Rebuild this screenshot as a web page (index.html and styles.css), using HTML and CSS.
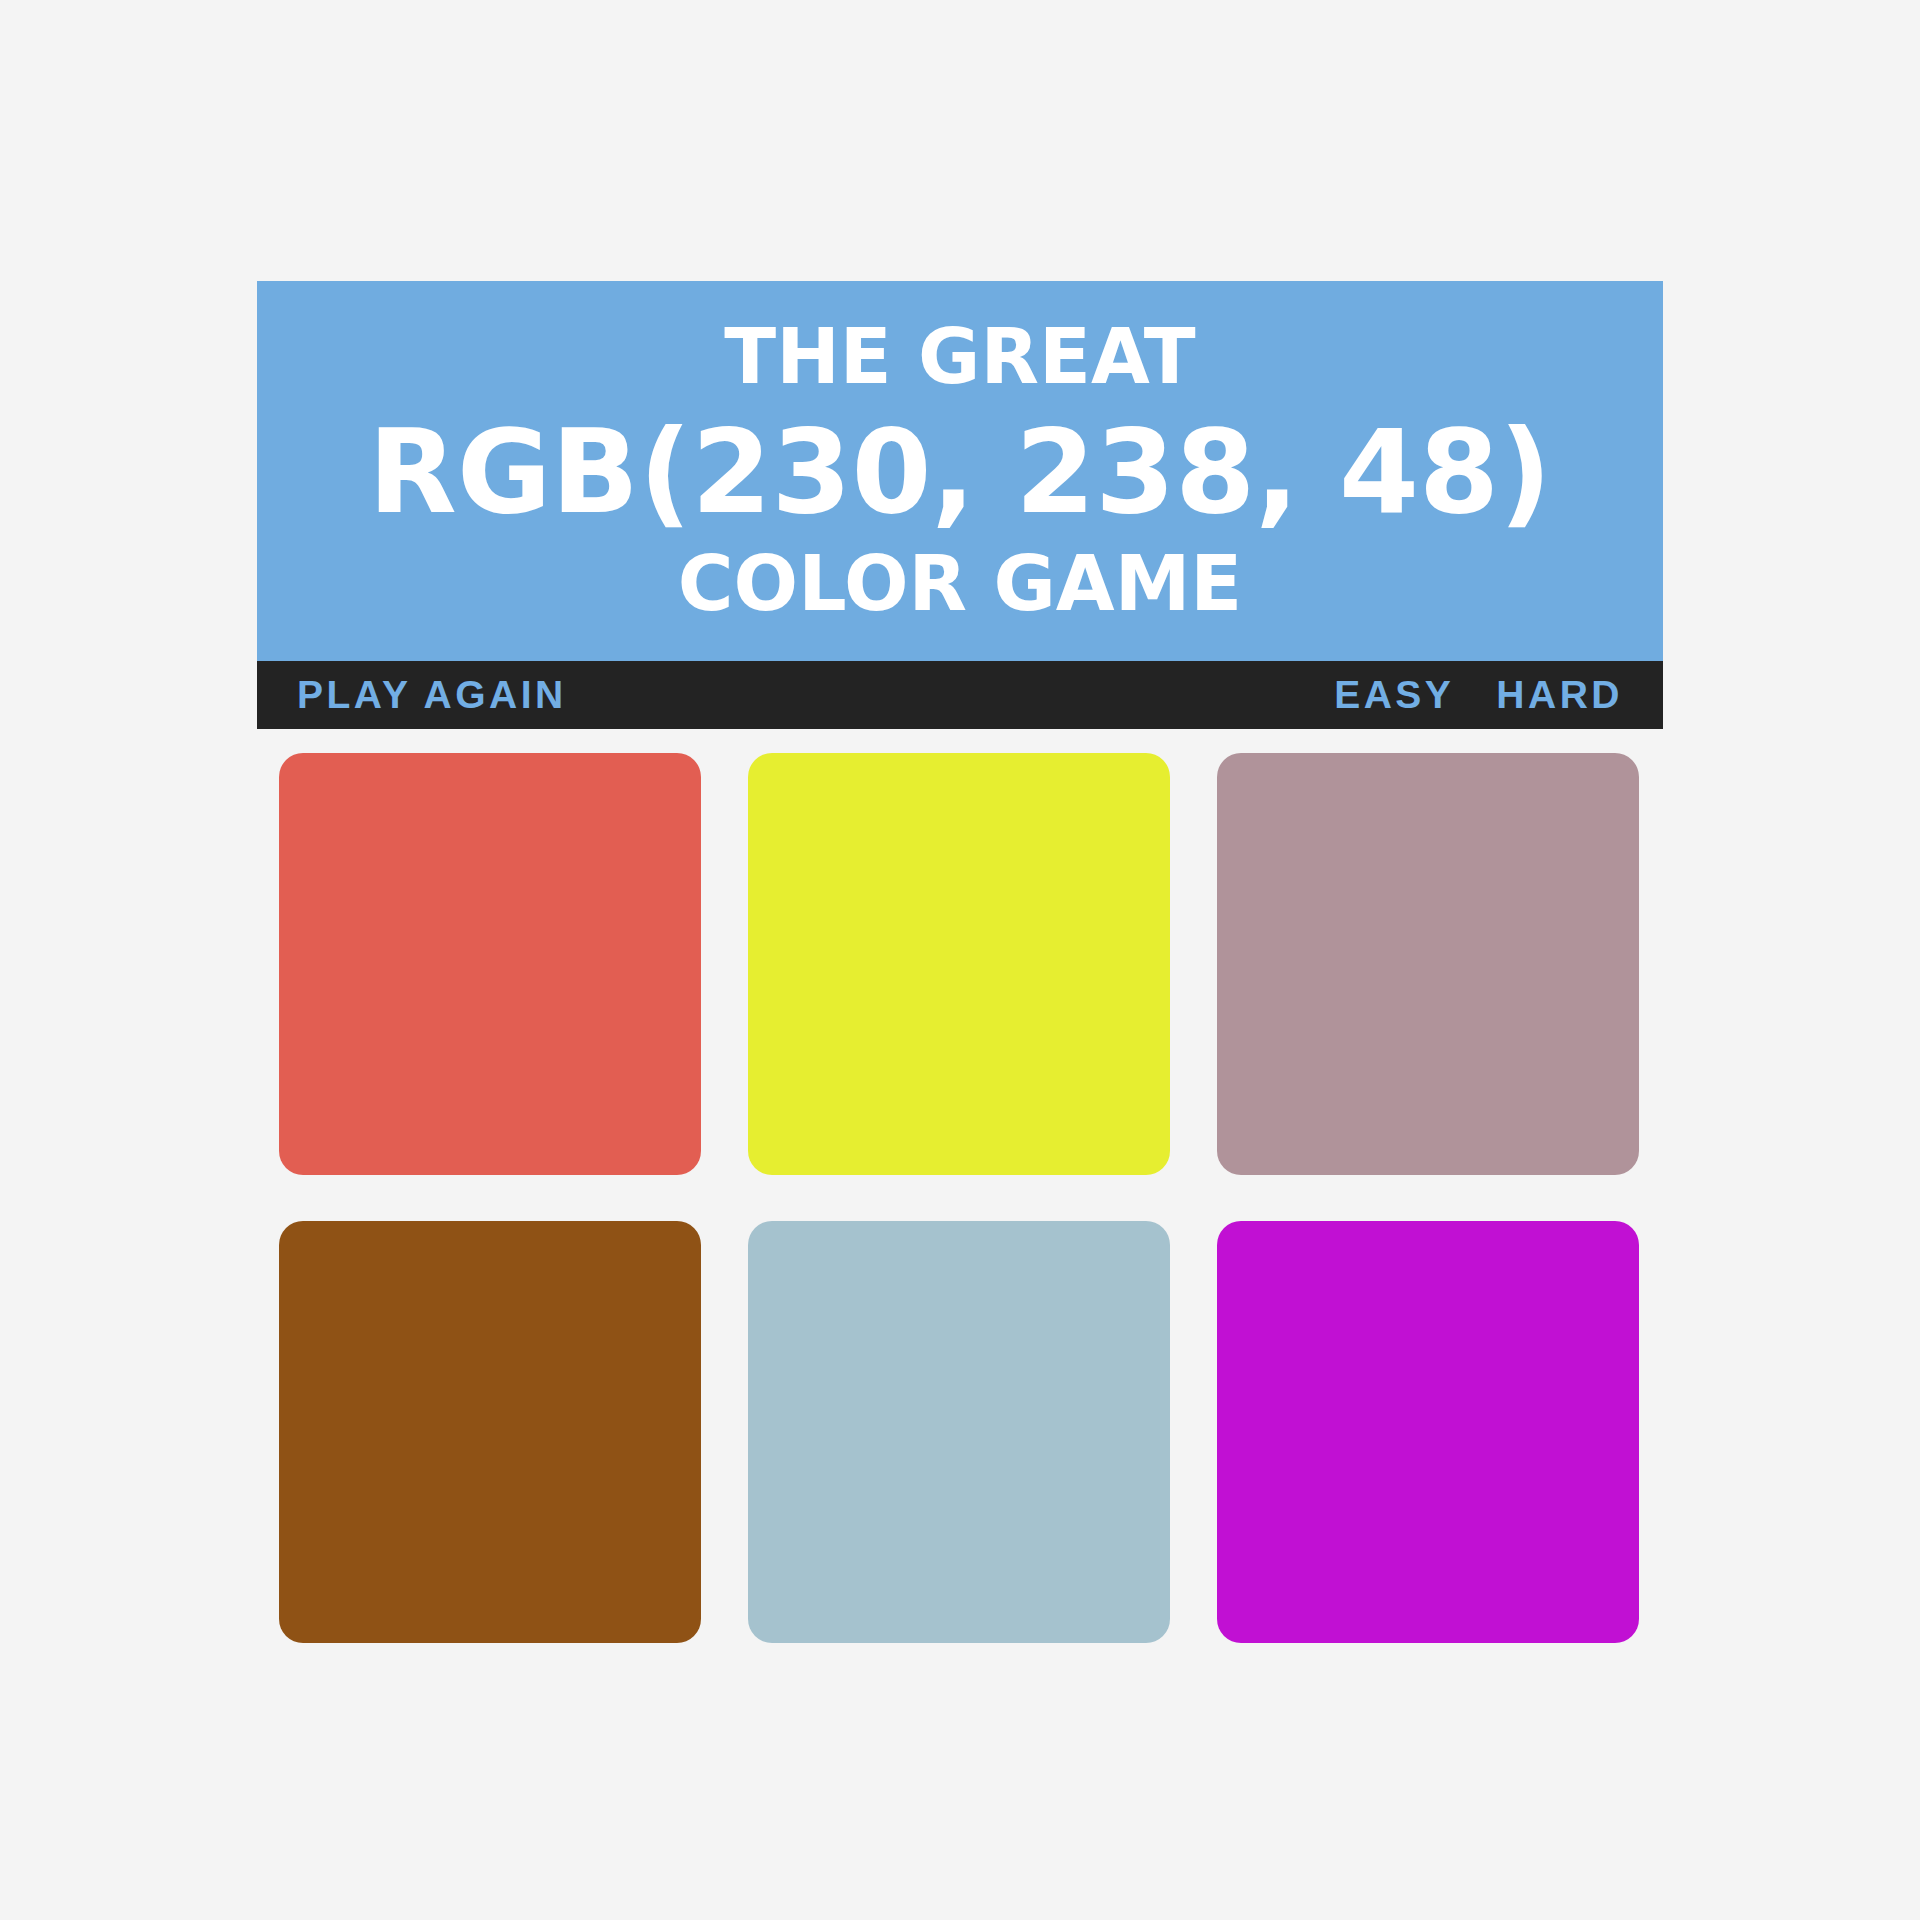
FILE: index.html
```html
<!DOCTYPE html>
<html lang="en">
<head>
<meta charset="utf-8">
<title>The Great RGB Color Game</title>
<link rel="stylesheet" href="styles.css">
</head>
<body>
<div class="game">
  <header class="title">
    <span class="line small first">THE GREAT</span>
    <span class="line big">RGB(230, 238, 48)</span>
    <span class="line small last">COLOR GAME</span>
  </header>
  <nav class="stripe">
    <button class="btn">PLAY AGAIN</button>
    <div class="modes">
      <button class="btn">EASY</button>
      <button class="btn">HARD</button>
    </div>
  </nav>
  <main class="board">
    <div class="square c1"></div>
    <div class="square c2"></div>
    <div class="square c3"></div>
    <div class="square c4"></div>
    <div class="square c5"></div>
    <div class="square c6"></div>
  </main>
</div>
</body>
</html>
```
FILE: styles.css
```css
html, body {
  margin: 0;
  padding: 0;
  background: #f4f4f4;
}
.game {
  width: 1406px;
  margin: 281px auto 0;
}
.title {
  background: #70ace0;
  color: #ffffff;
  font-family: "DejaVu Sans", sans-serif;
  font-weight: bold;
  text-align: center;
  padding: 34px 0 38px;
  height: 308px;
}
.line {
  display: block;
  white-space: nowrap;
}
.small {
  font-size: 76px;
}
.first { line-height: 84px; }
.last { line-height: 78px; }
.big {
  font-size: 115px;
  line-height: 146px;
}
.stripe {
  background: #232323;
  height: 68px;
  display: flex;
  align-items: center;
  justify-content: space-between;
  padding: 0 40px 0 40px;
}
.modes {
  display: flex;
  gap: 42px;
}
.btn {
  border: none;
  background: none;
  padding: 0;
  margin: 0;
  color: #72aee4;
  font-family: "Liberation Sans", Arial, sans-serif;
  font-weight: bold;
  font-size: 39px;
  letter-spacing: 3.5px;
  line-height: 68px;
}
.board {
  display: grid;
  grid-template-columns: repeat(3, 422px);
  grid-auto-rows: 422px;
  column-gap: 47px;
  row-gap: 46px;
  padding: 24px 0 0 22px;
}
.square {
  border-radius: 24px;
}
.c1 { background: #e25e52; }
.c2 { background: #e6ee30; }
.c3 { background: #b0939a; }
.c4 { background: #8f5215; }
.c5 { background: #a5c2ce; }
.c6 { background: #c110d3; }
```
